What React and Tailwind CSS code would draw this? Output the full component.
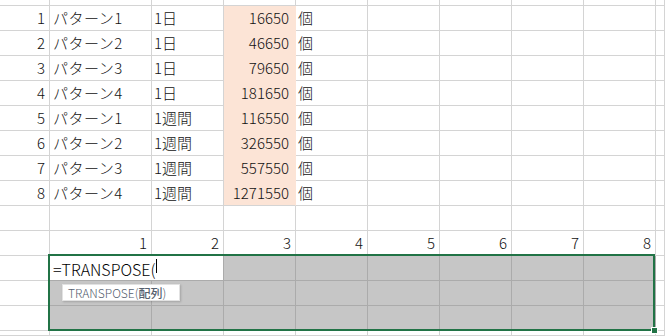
const rows = [
  [1, 'パターン1', '1日', 16650],
  [2, 'パターン2', '1日', 46650],
  [3, 'パターン3', '1日', 79650],
  [4, 'パターン4', '1日', 181650],
  [5, 'パターン1', '1週間', 116550],
  [6, 'パターン2', '1週間', 326550],
  [7, 'パターン3', '1週間', 557550],
  [8, 'パターン4', '1週間', 1271550],
];

const cell = 'border-r border-b border-[#d4d4d4] leading-[24px] whitespace-nowrap overflow-visible';
const EMPTY_COLS = 5;

const Blank = ({ n }) =>
  Array.from({ length: n }).map((_, i) => <div key={i} className={cell} />);

const App = () => {
  return (
    <div className="relative w-[665px] h-[336px] overflow-hidden bg-white text-[15px] font-light text-[#111] font-['Noto_Sans_CJK_JP','Noto_Sans',sans-serif]">
      <div className="grid grid-cols-[50px_102px_72px_72px_72px_72px_72px_72px_72px_1fr] grid-rows-[6px_repeat(13,25px)_5px]">
        {/* partial top row */}
        <Blank n={10} />

        {/* data rows */}
        {rows.map(([no, name, term, qty], i) => (
          <div key={no} className="contents">
            <div className={`${cell} text-right pr-[4px]`}>{no}</div>
            <div className={`${cell} pl-[3px] tracking-[0.5px]`}>{name}</div>
            <div className={`${cell} pl-[2px]`}>{term}</div>
            <div className={`border-r border-b border-r-[#fce4d6] ${i === rows.length - 1 ? 'border-b-[#d4d4d4]' : 'border-b-[#fce4d6]'} bg-[#fce4d6] leading-[24px] text-right pr-[6px]`}>
              {qty}
            </div>
            <div className={`${cell} pl-[2px]`}>個</div>
            <Blank n={EMPTY_COLS} />
          </div>
        ))}

        {/* empty row */}
        <Blank n={10} />

        {/* header numbers */}
        <div className={cell} />
        {[1, 2, 3, 4, 5, 6, 7, 8].map((n) => (
          <div key={n} className={`${cell} text-right pr-[4px]`}>{n}</div>
        ))}
        <div className={cell} />

        {/* selected range, first row with the active cell */}
        <div className={cell} />
        <div className="col-span-2 bg-white border-r border-b border-[#ababab] leading-[24px] pl-[3px] pt-[1px] flex items-start">
          <span className="text-[16px] leading-[24px] text-black">=TRANSPOSE(</span>
          <span className="w-px h-[14px] bg-black mt-[2px]" />
        </div>
        {Array.from({ length: 6 }).map((_, i) => (
          <div key={i} className="bg-[#c6c6c6] border-r border-b border-[#ababab]" />
        ))}
        <div className={cell} />

        {[0, 1].map((r) => (
          <div key={r} className="contents">
            <div className={cell} />
            {Array.from({ length: 8 }).map((_, i) => (
              <div key={i} className="bg-[#c6c6c6] border-r border-b border-[#ababab]" />
            ))}
            <div className={cell} />
          </div>
        ))}

        {/* partial bottom row */}
        <Blank n={10} />
      </div>

      {/* selection outline */}
      <div className="absolute left-[48px] top-[254px] w-[607px] h-[77px] border-2 border-[#217346] pointer-events-none" />
      <div className="absolute left-[651px] top-[327px] w-[7px] h-[7px] bg-[#217346] border border-white" />

      {/* function hint */}
      <div className="absolute left-[62px] top-[284px] w-[118px] h-[17px] bg-white border border-[#e2e2e2] shadow-[1px_1px_2px_rgba(0,0,0,0.18)] flex items-center pl-[5px] text-[12px] leading-none text-[#55606e] whitespace-nowrap">
        TRANSPOSE(<span className="font-medium">配列</span>)
      </div>
    </div>
  );
};

export default App;
